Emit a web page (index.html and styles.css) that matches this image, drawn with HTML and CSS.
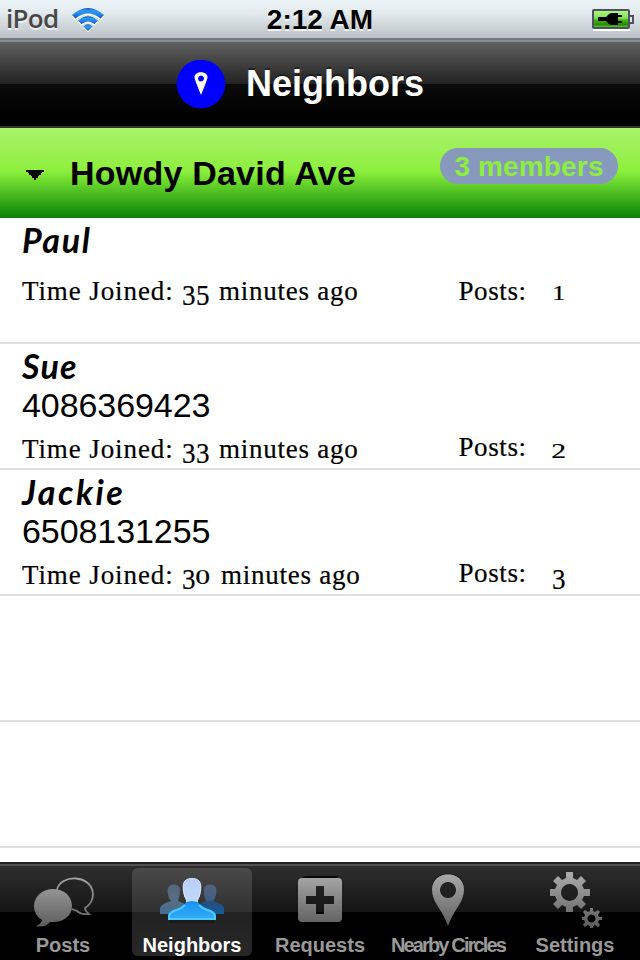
FILE: index.html
```html
<!DOCTYPE html>
<html lang="en">
<head>
<meta charset="utf-8">
<title>Neighbors</title>
<link rel="stylesheet" href="styles.css">
</head>
<body>
<div class="status">
  <div class="carrier"><span class="device">iPod</span>
    <svg class="wifi" width="34" height="28" viewBox="0 0 34 28">
      <defs><linearGradient id="wf" x1="0" y1="0" x2="0" y2="1"><stop offset="0" stop-color="#1648b0"/><stop offset=".25" stop-color="#2e98e8"/><stop offset=".6" stop-color="#2388f0"/><stop offset="1" stop-color="#0b46c8"/></linearGradient></defs>
      <g transform="translate(0 1.5)" fill="#fff"><path d="M1 9Q17-5 33 9L29.500 12.500Q17 2.500 4.500 12.500Z"/><path d="M7 14.500Q17 6 27 14.500L23.600 18Q17 13 10.400 18Z"/><path d="M12.500 20.500Q17 16 21.500 20.500L17 25Z"/></g>
      <g fill="url(#wf)"><path d="M1 9Q17-5 33 9L29.500 12.500Q17 2.500 4.500 12.500Z"/><path d="M7 14.500Q17 6 27 14.500L23.600 18Q17 13 10.400 18Z"/><path d="M12.500 20.500Q17 16 21.500 20.500L17 25Z"/></g>
    </svg>
  </div>
  <div class="time">2:12 AM</div>
  <svg class="battery" width="42" height="23" viewBox="0 0 42 23">
    <defs><linearGradient id="bt" x1="0" y1="0" x2="0" y2="1"><stop offset="0" stop-color="#b5fb83"/><stop offset=".45" stop-color="#80e052"/><stop offset=".55" stop-color="#48b51d"/><stop offset=".8" stop-color="#278b02"/><stop offset="1" stop-color="#66d532"/></linearGradient></defs>
    <path d="M1 21h37" stroke="#fff" stroke-width="2"/>
    <rect x="1" y="1" width="36" height="18" rx="1" fill="url(#bt)" stroke="#4c5168" stroke-width="2"/>
    <path d="M38 7h3v7h-3" fill="#dfe4e8" stroke="#4c5168" stroke-width="2"/>
    <path d="M6 8h8l3-3 2-1h7v2h4v2h-4v4h4v2h-4v2h-7l-2-1-3-3H6z"/>
  </svg>
</div>
<header class="nav">
  <svg width="50" height="50" viewBox="0 0 50 50"><circle cx="25" cy="25" r="24.300" fill="#00f"/><path fill="#fff" fill-rule="evenodd" d="M25 36L20 23.500Q18.500 20 18.500 18C18.500 11.500 31.500 11.500 31.500 18Q31.500 20 30 23.500ZM25 16.500a3 3 0 1 0 .01 0Z"/></svg>
  <h1>Neighbors</h1>
</header>
<section class="group">
  <svg class="arrow" width="18" height="10" viewBox="0 0 18 10"><path d="M0 0h18v2h-2v1h-1v2h-2v1h-1v2h-2v2H8V8H6V6H5V5H3V3H2V2H0z"/></svg>
  <h2>Howdy David Ave</h2>
  <span class="badge">3 members</span>
</section>
<main>
  <article class="row quiet">
    <div class="name paul">Paul</div>
    <div class="meta"><div class="joined"><span class="label">Time Joined:</span><span class="num"><i>3</i><i>5</i></span><span>minutes ago</span></div><span class="posts">Posts:</span><span class="num count"><b class="one">1</b></span></div>
  </article>
  <article class="row">
    <div class="name sue">Sue</div>
    <div class="phone">4086369423</div>
    <div class="meta"><div class="joined"><span class="label">Time Joined:</span><span class="num"><i>3</i><i>3</i></span><span>minutes ago</span></div><span class="posts">Posts:</span><span class="num count"><b>2</b></span></div>
  </article>
  <article class="row">
    <div class="name jackie">Jackie</div>
    <div class="phone">6508131255</div>
    <div class="meta"><div class="joined"><span class="label">Time Joined:</span><span class="num wide"><i>3</i><b>0</b></span><span>minutes ago</span></div><span class="posts">Posts:</span><span class="num count"><i>3</i></span></div>
  </article>
  <div class="row"></div>
  <div class="row"></div>
</main>
<nav class="tabs">
  <div class="tab">
    <svg width="120" height="64" viewBox="0 -2 120 64">
      <defs><linearGradient id="gr" gradientUnits="userSpaceOnUse" x1="0" y1="4" x2="0" y2="58"><stop offset="0" stop-color="#aaa"/><stop offset="1" stop-color="#5b5b5b"/></linearGradient></defs>
      <path d="M53 20C56 4 88 4 89 24Q89 33 81 38Q81 41 85 44Q77 45 73 41L68 39" fill="none" stroke="url(#gr)" stroke-width="1.800"/>
      <path d="M49 19C39 19 30 26 30 36Q30 45 38 50Q37 54 32 56Q41 58 46 52C59 53 68 46 68 36C68 26 60 19 49 19Z" fill="url(#gr)"/>
    </svg><span class="nudge">Posts</span>
  </div>
  <div class="tab active">
    <svg width="120" height="64" viewBox="0 -2 120 64">
      <defs><linearGradient id="hd" x1="0" y1="0" x2="0" y2="1"><stop offset="0" stop-color="#bccbfa"/><stop offset="1" stop-color="#c0def9"/></linearGradient><linearGradient id="bd" x1="0" y1="0" x2="0" y2="1"><stop offset="0" stop-color="#168ff0"/><stop offset="1" stop-color="#36aefa"/></linearGradient><linearGradient id="sd" x1="0" y1="0" x2="0" y2="1"><stop offset="0" stop-color="#55657e"/><stop offset=".55" stop-color="#596e83"/><stop offset="1" stop-color="#416d94"/></linearGradient><linearGradient id="sr" x1="0" y1="0" x2="0" y2="1"><stop offset="0" stop-color="#53627b"/><stop offset=".5" stop-color="#415e80"/><stop offset=".6" stop-color="#234e7d"/><stop offset="1" stop-color="#175b9b"/></linearGradient></defs>
      <path fill="url(#sd)" d="M42 14.500C50 14.500 48 23 47 28L46 31Q57 34 57 44H28V38Q29 34 39 31L37 28C35 22 34 14.500 42 14.500Z"/>
      <path fill="url(#sr)" d="M78 14.500C86 14.500 85 22 83 28L81 31Q91 34 92 38V44H64Q64 34 74 31L73 28C72 23 70 14.500 78 14.500Z"/>
      <path d="M37 51.500h46" stroke="#111" stroke-opacity=".45" stroke-width="3"/>
      <path fill="url(#hd)" stroke="#dde9ff" stroke-width="1" d="M60 8.500C70 8.500 69.500 16 68 24Q67 28 65.500 30V36H54.500V30Q53 28 52 24C50.500 16 50 8.500 60 8.500Z"/>
      <path fill="url(#bd)" d="M36 50V46Q37 41 44 39Q51 37 54 32L60 31L66 32Q69 37 76 39Q83 41 84 46V50Z"/>
      <path fill="none" stroke="#49ccfc" stroke-width="2" d="M53 35Q50 38 46 39.500Q37 42 37 46V49H83V46Q83 42 74 39.500Q70 38 67 35"/>
    </svg><span>Neighbors</span>
  </div>
  <div class="tab">
    <svg width="120" height="64" viewBox="0 -2 120 64"><path d="M42 9Q43 7 46 7h32" fill="none" stroke="#080808" stroke-width="2"/><path fill="url(#gr)" fill-rule="evenodd" d="M42 8h36q4 0 4 4v36q0 4-4 4H42q-4 0-4-4V12q0-4 4-4ZM56 16v10H46v8h10v10h8V34h10v-8H64V16Z"/></svg><span>Requests</span>
  </div>
  <div class="tab nearby">
    <svg width="120" height="64" viewBox="0 -2 120 64"><path d="M45 15C48 1 72 1 75 15" fill="none" stroke="#111" stroke-width="2"/><path fill="url(#gr)" fill-rule="evenodd" d="M60 56Q57 47 49 35Q44 27 44 19.500C44 -1 76 -1 76 19.500Q76 27 71 35Q63 47 60 56ZM60 12a8 8 0 1 0 .01 0Z"/></svg><span>Nearby Circles</span>
  </div>
  <div class="tab">
    <svg width="120" height="64" viewBox="1 -2 120 64">
      <g fill="url(#gr)"><path fill-rule="evenodd" d="M51 2h7v6l4 2 4-4 5 5-4 4 2 4h6v7h-6l-2 4 4 4-5 5-4-4-4 2v5h-7v-5l-4-2-4 4-5-5 4-4-2-4h-5v-7h5l2-4-4-4 5-5 4 4 4-2ZM54.500 14a8.500 8.500 0 1 0 .01 0Z"/><path fill-rule="evenodd" d="M75 38h3v3l2 1 3-2 2 2-2 3 1 2h3v3h-3l-1 2 2 3-2 2-3-2-2 1v2h-3v-2l-2-1-3 2-2-2 2-3-1-2h-2v-3h2l1-2-2-3 2-2 3 2 2-1ZM76.500 44.500a4 4 0 1 0 .01 0Z"/></g>
    </svg><span class="nudge">Settings</span>
  </div>
</nav>
</body>
</html>
```
FILE: styles.css
```css
* { box-sizing: border-box; }
body {
  margin: 0;
  width: 640px;
  height: 960px;
  display: flex;
  flex-direction: column;
  background: #fff;
  color: #000;
  font-family: "Liberation Sans", sans-serif;
}
h1, h2 { margin: 0; }
svg { display: block; flex: none; }
.status {
  height: 40px;
  flex: none;
  display: grid;
  grid-template-columns: 1fr auto 1fr;
  background: linear-gradient(#edf4f7, #e2eaed 35%, #bcc3c6);
  border-bottom: 2px solid #71797c;
  text-shadow: 0 2px 0 rgba(255,255,255,.7);
}
.carrier { display: flex; padding-left: 6px; }
.device {
  width: 65px;
  color: #484848;
  font: 600 26px/36px "Open Sans", sans-serif;
  letter-spacing: -.7px;
}
.wifi { margin-top: 6px; }
.time { font-size: 28px; font-weight: bold; line-height: 39px; }
.battery { justify-self: end; margin: 9px 6px 0 0; }
.nav {
  height: 88px;
  flex: none;
  display: flex;
  align-items: center;
  padding: 0 0 0 176px;
  gap: 20px;
  color: #fff;
  background: linear-gradient(#606060, #222 50%, #0b0b0b 50%, #000 90%);
  border-top: 2px solid #899093;
  border-bottom: 2px solid #333;
}
.nav h1 { font-size: 36px; line-height: 50px; text-shadow: 0 -2px 0 rgba(0,0,0,.4); }
.group {
  height: 90px;
  flex: none;
  display: flex;
  align-items: flex-start;
  padding: 0 22px 0 26px;
  background: linear-gradient(#aaf26c, #8def3d 48%, #6bd82d 60%, #088006);
}
.arrow { margin-top: 42px; }
.group h2 { margin: 0 0 0 26px; font-size: 34px; line-height: 90px; letter-spacing: .22px; }
.badge {
  width: 178px;
  height: 36px;
  margin: 20px 0 0 auto;
  border-radius: 18px;
  background: #8799bd;
  color: #8dee3f;
  font-size: 28px;
  font-weight: bold;
  line-height: 37px;
  letter-spacing: .15px;
  text-align: center;
}
main { flex: 1; min-height: 0; }
.row {
  height: 126px;
  padding: 1px 22px 0;
  border-bottom: 2px solid #e0e0e0;
}
.name { font: italic 700 34px/42px Lato, sans-serif; height: 40px; letter-spacing: 1.2px; }
.paul { letter-spacing: 1.7px; }
.jackie { letter-spacing: 2.5px; }
.phone { font-size: 34px; line-height: 40px; letter-spacing: -.08px; }
.meta {
  display: flex;
  margin-top: 9px;
  font-family: "Liberation Serif", serif;
  font-size: 27px;
  line-height: 30px;
  letter-spacing: .75px;
  white-space: nowrap;
  -webkit-text-stroke: .2px #000;
}
.quiet .meta { margin-top: 17px; }
.joined { display: flex; width: 436.500px; }
.label { width: 160px; letter-spacing: .9px; }
.num { display: flex; width: 37px; }
.wide { width: 39px; }
.num i, .num b { width: 14px; font-style: normal; font-weight: normal; }
.num i { transform: translateY(4px) scaleY(1.06); }
.num b { transform: translateY(2.500px) scale(1.1, .74); }
.num .one { transform: translateY(2.500px) scale(1, .76); }
.posts { width: 93.500px; margin-top: -2px; letter-spacing: .6px; }
.quiet .posts { margin-top: 0; }
.tabs {
  height: 98px;
  flex: none;
  display: flex;
  justify-content: space-between;
  padding: 2px 4px 0;
  background: linear-gradient(#2f2f2f, #151515 48px, #000 48px);
  border-top: 2px solid #202020;
  box-shadow: inset 0 2px 0 #505050;
}
.tab {
  width: 120px;
  height: 88px;
  margin-top: 2px;
  display: flex;
  flex-direction: column;
  align-items: center;
  color: #999;
  font-size: 20px;
  font-weight: bold;
  border-radius: 6px;
}
.tab span { line-height: 26px; white-space: nowrap; }
.tab .nudge { margin-left: -2px; }
.active { color: #fff; background: linear-gradient(#494949, #303030 50%, #222 50%, #272727); }
.nearby span { letter-spacing: -1.85px; }
```
